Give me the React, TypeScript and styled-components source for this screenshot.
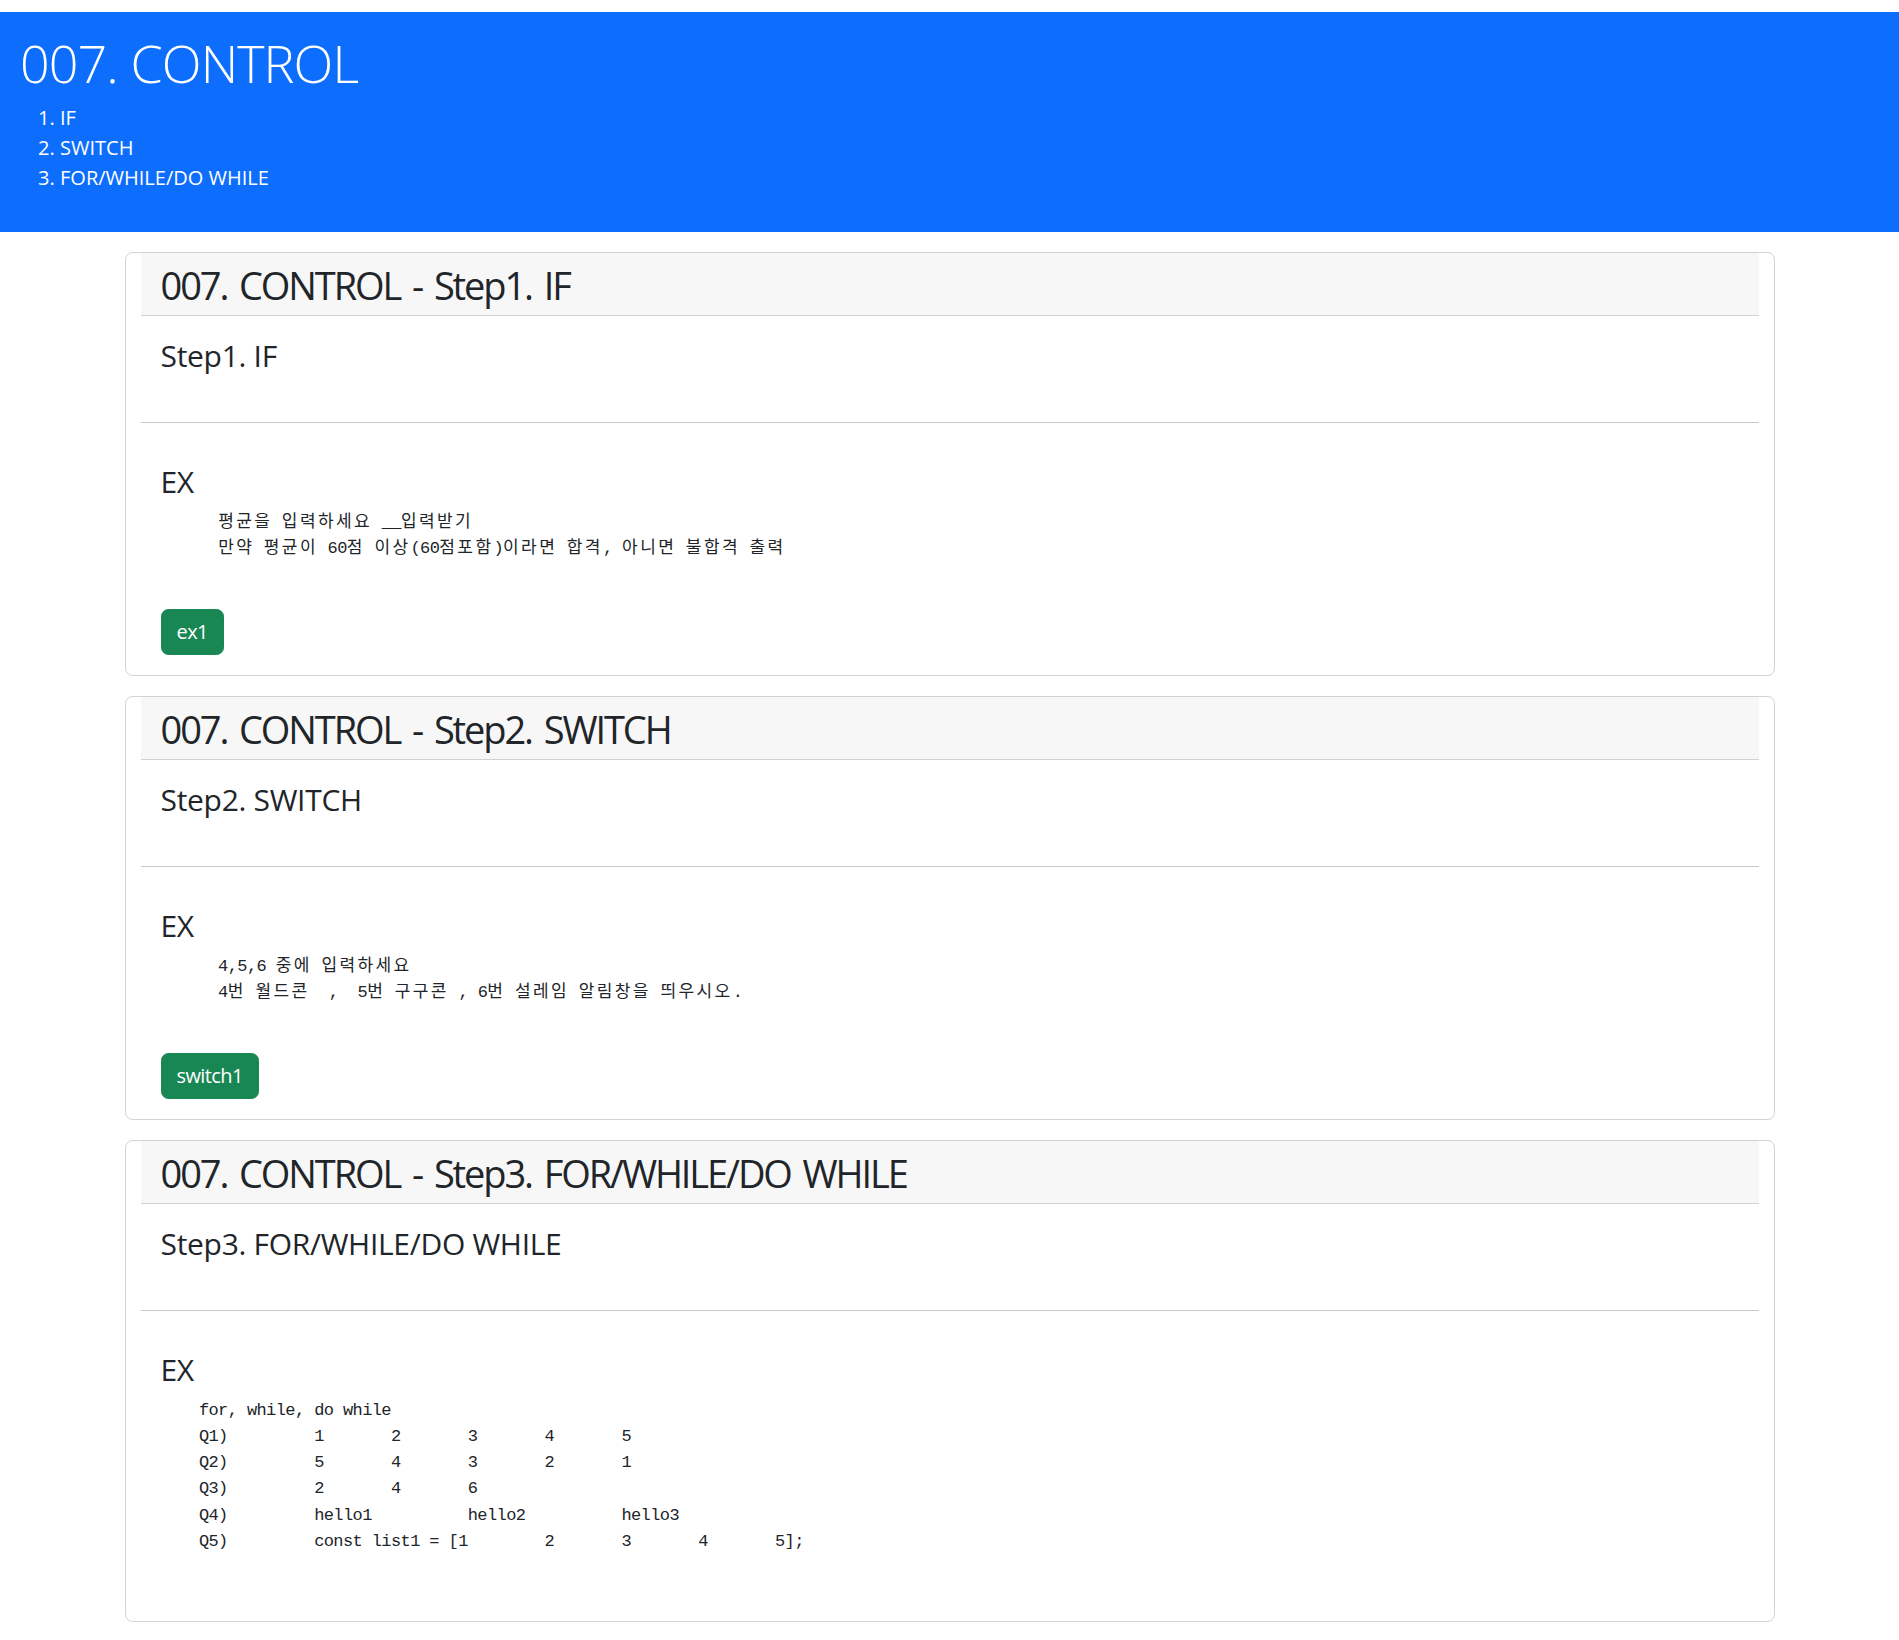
import styled, { createGlobalStyle } from 'styled-components';

const GlobalStyle = createGlobalStyle`
  html, body {
    margin: 0;
    padding: 0;
    background: #fff;
  }
  body {
    font-family: 'Open Sans', 'Noto Sans CJK KR', sans-serif;
    color: #212529;
  }
  * {
    box-sizing: border-box;
  }
`;

const Hero = styled.header`
  margin-top: 12px;
  padding: 20px 20px 19px;
  background-color: #0d6efd;
  color: #fff;
`;

const HeroTitle = styled.h1`
  margin: 0 0 9px;
  font-size: 52px;
  line-height: 62px;
  font-weight: 300;
  letter-spacing: -0.9px;
`;

const HeroList = styled.ol`
  margin: 0 0 20px;
  padding-left: 40px;
  font-size: 20px;
  line-height: 30px;
`;

const Main = styled.main`
  display: flex;
  flex-direction: column;
  align-items: center;
  gap: 20px;
  padding: 20px 0;
`;

const Card = styled.section`
  width: 1650px;
  padding: 0 15px;
  border: 1px solid #d2d2d2;
  border-radius: 7.5px;
  background: #fff;
`;

const CardHeader = styled.div`
  padding: 8px 20px 6px;
  background-color: #f7f7f7;
  border-bottom: 1px solid #d2d2d2;
  h2 {
    margin: 0;
    font-size: 38px;
    line-height: 48px;
    font-weight: 400;
    letter-spacing: -2.1px;
    word-spacing: 4px;
  }
`;

type BodyProps = {
  top?: number;
  bottom?: number;
};
const CardBody = styled.div<BodyProps>`
  padding: ${({ top }) => top ?? 20}px 20px ${({ bottom }) => bottom ?? 20}px;
`;

const SubTitle = styled.h4`
  margin: 0 0 10px;
  font-size: 30px;
  line-height: 36px;
  font-weight: 400;
  letter-spacing: -0.3px;
`;

const Divider = styled.hr`
  margin: 20px 0;
  border: 0;
  border-top: 1px solid #c8c9ca;
`;

const Code = styled.pre`
  margin: 0 0 20px;
  font-family: 'Liberation Mono', 'Noto Sans CJK KR', monospace;
  font-size: 17px;
  letter-spacing: -0.6px;
  line-height: 26.25px;
  tab-size: 8;
  color: #212529;
`;

const CodeLine = styled.span`
  display: block;
  min-height: 26.25px;
`;

// korean glyphs run on the wider grid of the original fixed-width font
const Hangul = styled.span`
  letter-spacing: 2.4px;
`;

const Button = styled.button`
  display: inline-block;
  padding: 7px 15px;
  font-family: 'Open Sans', sans-serif;
  font-size: 20px;
  line-height: 30px;
  letter-spacing: -0.6px;
  color: #fff;
  background-color: #198754;
  border: 1px solid #198754;
  border-radius: 7.5px;
  cursor: pointer;
`;

type Step = {
  no: number;
  name: string;
  lines: string[];
  button?: string;
};

const steps: Step[] = [
  {
    no: 1,
    name: 'IF',
    lines: [
      '      평균을 입력하세요 __입력받기',
      '      만약 평균이 60점 이상(60점포함)이라면 합격, 아니면 불합격 출력',
      '',
    ],
    button: 'ex1',
  },
  {
    no: 2,
    name: 'SWITCH',
    lines: [
      '      4,5,6 중에 입력하세요',
      '      4번 월드콘  ,  5번 구구콘 , 6번 설레임 알림창을 띄우시오.',
      '',
    ],
    button: 'switch1',
  },
  {
    no: 3,
    name: 'FOR/WHILE/DO WHILE',
    lines: [
      '    for, while, do while',
      '    Q1)\t\t1\t2\t3\t4\t5',
      '    Q2)\t\t5\t4\t3\t2\t1',
      '    Q3)\t\t2\t4\t6',
      '    Q4)\t\thello1\t\thello2\t\thello3',
      '    Q5)\t\tconst list1 = [1\t2\t3\t4\t5];',
      '',
    ],
  },
];

const HANGUL = /([\uAC00-\uD7A3]+)/;

const renderLine = (line: string) =>
  line
    .split(HANGUL)
    .filter((part) => part.length > 0)
    .map((part, i) =>
      HANGUL.test(part) ? <Hangul key={i}>{part}</Hangul> : part
    );

export default function App() {
  return (
    <>
      <GlobalStyle />
      <Hero>
        <HeroTitle>007. CONTROL</HeroTitle>
        <HeroList>
          {steps.map((s) => (
            <li key={s.no}>{s.name}</li>
          ))}
        </HeroList>
      </Hero>
      <Main>
        {steps.map((s) => {
          const step = `Step${s.no}. ${s.name}`;
          return (
            <Card key={s.no}>
              <CardHeader>
                <h2>{`007. CONTROL - ${step}`}</h2>
              </CardHeader>
              <CardBody top={22} bottom={18}>
                <SubTitle>{step}</SubTitle>
              </CardBody>
              <Divider />
              <CardBody top={21}>
                <SubTitle>EX</SubTitle>
                <Code>
                  {s.lines.map((line, i) => (
                    <CodeLine key={i}>{renderLine(line)}</CodeLine>
                  ))}
                </Code>
                {s.button && <Button>{s.button}</Button>}
              </CardBody>
            </Card>
          );
        })}
      </Main>
    </>
  );
}
